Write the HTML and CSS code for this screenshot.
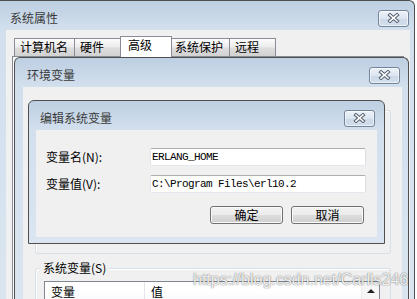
FILE: index.html
```html
<!DOCTYPE html>
<html lang="zh-CN">
<head>
  <meta charset="UTF-8" />
  <title>系统属性 - 环境变量</title>
  <link rel="stylesheet" href="styles.css">
</head>
<body>
  <!-- 系统属性 -->
  <div class="win win-sys">
    <div class="titlebar">
      <span class="title">系统属性</span>
      <span class="close-btn">
        <svg width="13" height="10" viewBox="0 0 13 10"><path d="M3 2l7 6m0-6l-7 6" stroke="#556070" stroke-width="3.6" stroke-linecap="square"/><path d="M3 2l7 6m0-6l-7 6" stroke="#fff" stroke-width="1.6" stroke-linecap="square"/></svg>
      </span>
    </div>
    <div class="client sys-client">
      <div class="tabs">
        <div class="tab t1">计算机名</div>
        <div class="tab t2">硬件</div>
        <div class="tab t3 active">高级</div>
        <div class="tab t4">系统保护</div>
        <div class="tab t5">远程</div>
      </div>
      <div class="tab-pane"></div>
    </div>
  </div>

  <!-- 环境变量 -->
  <div class="win win-env">
    <div class="titlebar">
      <span class="title">环境变量</span>
      <span class="close-btn">
        <svg width="13" height="10" viewBox="0 0 13 10"><path d="M3 2l7 6m0-6l-7 6" stroke="#556070" stroke-width="3.6" stroke-linecap="square"/><path d="M3 2l7 6m0-6l-7 6" stroke="#fff" stroke-width="1.6" stroke-linecap="square"/></svg>
      </span>
    </div>
    <div class="client env-client">
      <div class="group group-user"></div>
      <div class="group group-sys">
        <span class="group-label">系统变量(S)</span>
        <div class="list">
          <div class="list-body">
            <div class="list-head">
              <span class="col col-name">变量</span>
              <span class="col col-value">值</span>
            </div>
          </div>
          <div class="scrollbar"><div class="scroll-up"></div></div>
        </div>
      </div>
    </div>
  </div>

  <!-- 编辑系统变量 -->
  <div class="win win-edit">
    <div class="titlebar">
      <span class="title">编辑系统变量</span>
      <span class="close-btn">
        <svg width="13" height="10" viewBox="0 0 13 10"><path d="M3 2l7 6m0-6l-7 6" stroke="#556070" stroke-width="3.6" stroke-linecap="square"/><path d="M3 2l7 6m0-6l-7 6" stroke="#fff" stroke-width="1.6" stroke-linecap="square"/></svg>
      </span>
    </div>
    <div class="client edit-client">
      <div class="form">
        <label for="var-name">变量名(N):</label>
        <input type="text" id="var-name" value="ERLANG_HOME" />
        <label for="var-value">变量值(V):</label>
        <input type="text" id="var-value" value="C:\Program Files\erl10.2" />
      </div>
      <div class="buttons">
        <button>确定</button>
        <button>取消</button>
      </div>
    </div>
  </div>

  <div class="watermark">https://blog.csdn.net/Carlis246</div>
</body>
</html>
```

FILE: styles.css
```css
body {
  margin: 0;
  width: 417px;
  height: 299px;
  overflow: hidden;
  position: relative;
  background: #ffffff;
  font-family: "Noto Sans CJK SC", sans-serif;
  font-size: 12px;
  color: #000;
}

/* windows */
.win {
  position: absolute;
  box-sizing: border-box;
  display: flex;
  flex-direction: column;
  border: 1px solid #4f4f4f;
  border-radius: 6px 6px 0 0;
  background: linear-gradient(#bdcfe2, #d2dfed 28px, #dae5f1);
  overflow: hidden;
}

/* the two big windows are cut off by the bottom of the shot */
.win-sys {
  left: -8px;
  top: 0;
  width: 423px;
  height: 299px;
  border-bottom: none;
}

.win-env {
  left: 14px;
  top: 57px;
  width: 395px;
  height: 242px;
  border-bottom: none;
}

.win-edit {
  left: 28px;
  top: 100px;
  width: 357px;
  height: 144px;
}

.titlebar {
  box-sizing: border-box;
  height: 29px;
  display: flex;
  align-items: center;
  flex-shrink: 0;
}

.win-sys .titlebar { padding: 5px 5px 0 17px; }
.win-env .titlebar { padding: 5px 8px 0 12px; }
.win-edit .titlebar { padding: 5px 9px 0 11px; }

.title {
  flex: 1;
  font-size: 12px;
  line-height: 14px;
  color: #3a3a3a;
}

.close-btn {
  box-sizing: border-box;
  width: 31px;
  height: 17px;
  display: flex;
  align-items: center;
  justify-content: center;
  border: 1px solid #74849a;
  border-radius: 3px;
  background: linear-gradient(#eef3f9, #dbe4ef 50%, #cbd8e7 51%, #d3deea);
  box-shadow: inset 0 0 0 1px rgba(255, 255, 255, 0.6);
}

.client {
  flex: 1;
  min-height: 0;
  background: #f0f0f0;
  box-sizing: border-box;
  overflow: hidden;
}

/* 系统属性 */
.sys-client {
  margin: 0 4px 0 13px;
  display: flex;
  flex-direction: column;
}

.tabs {
  height: 26px;
  flex-shrink: 0;
  box-sizing: border-box;
  padding: 6px 0 0 8px;
  display: flex;
  align-items: flex-end;
}

.tab {
  box-sizing: border-box;
  height: 18px;
  line-height: 16px;
  margin-left: -1px;
  border: 1px solid #898c95;
  border-bottom: none;
  background: linear-gradient(#fdfdfd, #ececec 45%, #dddddd 55%, #d2d2d2);
  white-space: nowrap;
}

.tab.active {
  position: relative;
  z-index: 1;
  height: 21px;
  margin-bottom: -1px;
  background: #ffffff;
}

.t1 { width: 61px; margin-left: 0; padding-left: 5px; }
.t2 { width: 47px; padding-left: 5px; }
.t3 { width: 52px; padding-left: 7px; }
.t4 { width: 59px; padding-left: 3px; }
.t5 { width: 47px; padding-left: 5px; }

.tab-pane {
  flex: 1;
  margin: 0 6px;
  border: 1px solid #898c95;
  border-bottom: none;
  background: #fbfbfb;
}

/* 环境变量 */
.env-client {
  margin: 0 6px 0 8px;
  padding: 23px 11px 0 12px;
}

.group {
  border: 1px solid #d5dfe5;
  border-radius: 3px;
  box-shadow: inset 1px 1px 0 #fff;
}

.group-user {
  height: 144px;
  box-sizing: border-box;
}

.group-sys {
  position: relative;
  margin-top: 14px;
  padding: 12px 10px 0 8px;
}

.group-label {
  position: absolute;
  left: 4px;
  top: -7px;
  padding: 0 3px;
  line-height: 12px;
  background: #f0f0f0;
}

.list {
  display: flex;
  height: 30px;
  border: 1px solid #828790;
  border-bottom: none;
  background: #ffffff;
}

.list-body {
  flex: 1;
}

.list-head {
  display: flex;
  height: 20px;
  line-height: 20px;
  background: linear-gradient(#ffffff, #ffffff 50%, #f7f8fa);
}

.col {
  box-sizing: border-box;
  padding-left: 6px;
}

.col-name {
  width: 100px;
  border-right: 1px solid #e5e5e5;
}

.scrollbar {
  width: 17px;
  background: #f0f0f0;
  border-left: 1px solid #ececec;
}

.scroll-up {
  height: 17px;
  display: flex;
  align-items: center;
  justify-content: center;
  background: #f6f6f6;
}

.scroll-up::before {
  content: "";
  border-left: 4px solid transparent;
  border-right: 4px solid transparent;
  border-bottom: 4px solid #222;
}

/* 编辑系统变量 */
.edit-client {
  margin: 0 7px 6px 7px;
  padding: 18px 11px 0 10px;
}

.form {
  display: grid;
  grid-template-columns: 104px 1fr;
  grid-auto-rows: 18px;
  row-gap: 9px;
}

.form label {
  line-height: 18px;
  white-space: nowrap;
}

.form input {
  box-sizing: border-box;
  width: 100%;
  height: 18px;
  margin: 0;
  padding: 0 1px;
  border: 1px solid;
  border-color: #abadb3 #dbdfe6 #e3e9ef #e2e3ea;
  border-radius: 2px;
  font-family: "Liberation Mono", monospace;
  font-size: 11px;
  letter-spacing: -0.6px;
  color: #000;
  background: #fff;
}

.buttons {
  display: flex;
  justify-content: flex-end;
  gap: 8px;
  margin-top: 13px;
  padding-right: 2px;
}

.buttons button {
  box-sizing: border-box;
  width: 73px;
  height: 18px;
  padding: 0;
  border: 1px solid #707070;
  border-radius: 3px;
  background: linear-gradient(#f2f2f2, #ebebeb 50%, #dddddd 51%, #cfcfcf);
  box-shadow: inset 0 0 0 1px #fbfbfb;
  font-family: "Noto Sans CJK SC", sans-serif;
  font-size: 12px;
  line-height: 14px;
  color: #000;
}

.watermark {
  position: absolute;
  left: 193px;
  top: 271px;
  font-family: "Liberation Sans", sans-serif;
  font-size: 16px;
  line-height: 18px;
  color: rgba(255, 255, 255, 0.9);
  text-shadow: 0 0 1px rgba(60, 60, 60, 0.7), 0 0 2px rgba(0, 0, 0, 0.25);
  white-space: nowrap;
}
```
